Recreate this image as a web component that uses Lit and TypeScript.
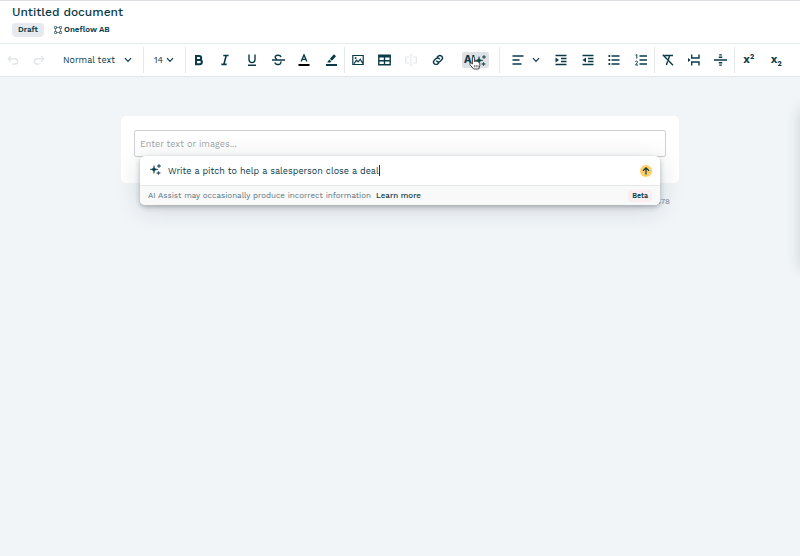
import { LitElement, html, svg, css } from "lit";
import { customElement } from "lit/decorators.js";

const icon = (body: unknown, w = 12, h = 12) =>
  html`<svg width=${w} height=${h} viewBox="0 0 ${w} ${h}" stroke-width="1.4" aria-hidden="true">${body}</svg>`;

const chevron = icon(svg`<path class="s" d="M1 1.2 4 4.3 7 1.2" stroke-width="1.2"/>`, 8, 6);

const sparkles = svg`<path d="M4 1.6C4.4 4.6 4.8 5 8 5.4 4.8 5.8 4.4 6.2 4 9.4 3.6 6.2 3.2 5.8 0 5.4 3.2 5 3.6 4.6 4 1.6Z" stroke="currentColor" stroke-width=".5"/>
  <path d="M9 0C9.2 1.5 9.5 1.8 11 2 9.5 2.2 9.2 2.5 9 4 8.8 2.5 8.5 2.2 7 2 8.5 1.8 8.8 1.5 9 0Z" stroke="currentColor" stroke-width=".4"/>
  <path d="M8.5 7C8.7 8.5 9 8.8 10.5 9 9 9.2 8.7 9.5 8.5 11 8.3 9.5 8 9.2 6.5 9 8 8.8 8.3 8.5 8.5 7Z" stroke="currentColor" stroke-width=".4"/>`;

const icons = {
  undo: icon(svg`<path class="s" d="M4 2 1.2 4.8 4 7.6M1.5 4.8H8a2.6 2.6 0 0 1 0 5.2H5.5"/>`),
  redo: icon(svg`<path class="s" d="M8 2 10.8 4.8 8 7.6M10.5 4.8H4a2.6 2.6 0 0 0 0 5.2H6.5"/>`),
  bold: icon(svg`<path class="s" stroke-width="2" d="M3 2H6.2a2 2 0 0 1 0 4H3ZM3 6H6.8a2.1 2.1 0 0 1 0 4.2H3Z"/>`),
  italic: icon(svg`<path class="s" stroke-width="1.6" d="M4.3 1.5H9.6M2.4 10.4H7.7M7.2 1.5 4.9 10.4"/>`),
  underline: icon(svg`<path class="s" d="M3 .5V5.6a3 3 0 0 0 6 0V.5M2 11.3H10"/>`),
  strike: icon(svg`<path class="s" d="M9 3.2C8.4.6 3.2.6 3.2 3.3 3.2 4.4 4 5 5 5.4M0 6H13M8.9 7.4C9.6 11.4 3.2 11.4 3 8.4"/>`, 13, 12),
  colour: icon(svg`<path class="s" d="M3.2 7.4 6 .8 8.8 7.4M4 5.4H8"/><path d="M.5 10H11.5V12H.5Z" fill="#000"/>`),
  marker: icon(svg`<path d="M9 .3 11 2.2 7 6.8 4.8 4.8ZM4.2 5.4 6.4 7.5 5 8.4H2.2Z"/><path d="M1 10H12V12H1Z"/>`),
  image: icon(svg`<path class="s" d="M.8 1.5H11.2V10.5H.8ZM2 9.6 4.6 6.2 6.2 7.8 8.2 5.2 10.8 9.4" stroke-width="1.2"/><circle cx="3.6" cy="4" r=".9"/>`),
  table: icon(svg`<path class="s" d="M.8 1.2H12.2V10.8H.8ZM.8 6.8H12.2M6.5 2V11"/><path d="M.5 1H12.5V3.5H.5Z"/>`, 13, 12),
  field: icon(svg`<path class="s" d="M4 3H.7V9H4M8 3H11.3V9H8M6 .7V11.3M4.8.7H7.2M4.8 11.3H7.2" stroke-width="1.1"/>`),
  link: icon(svg`<g transform="rotate(-45 6 6)"><path class="s" d="M5 8.5H3.3a2.5 2.5 0 0 1 0-5H5.4a2.5 2.5 0 0 1 2.3 3.2M7 3.5H8.7a2.5 2.5 0 0 1 0 5H6.6A2.5 2.5 0 0 1 4.3 5.3"/></g>`),
  align: icon(svg`<path class="s" d="M.5 2H11.5M.5 6H7.5M.5 10H9.5"/>`),
  indent: icon(svg`<path class="s" d="M.5 1.5H11.5M6 4.5H11.5M6 7.5H11.5M.5 10.5H11.5"/><path d="M.5 3.4 4 6 .5 8.6Z"/>`),
  outdent: icon(svg`<path class="s" d="M.5 1.5H11.5M6 4.5H11.5M6 7.5H11.5M.5 10.5H11.5"/><path d="M4 3.4V8.6L.5 6Z"/>`),
  bullets: icon(svg`<path class="s" d="M3.5 2H11.5M3.5 6H11.5M3.5 10H11.5"/><path d="M.5 1.1H2.2V2.9H.5ZM.5 5.1H2.2V6.9H.5ZM.5 9.1H2.2V10.9H.5Z"/>`),
  numbers: icon(svg`<path class="s" d="M4.5 2H12M4.5 6H12M4.5 10H12"/><path class="s" d="M.6 1.2 1.8.6V4.6M.3 7.6C1 6.5 2.8 7 2.4 8.4L.6 11H3" stroke-width="1"/>`),
  clear: icon(svg`<path class="s" d="M2.5 1.5H11M.8.8 11 11.2M7.4 2 6.4 5.6M5.6 7.2 4.4 11"/>`),
  pageBreak: icon(svg`<path class="s" d="M3.7.5V4H11V.5M3.7 11.5V8H11V11.5"/><path d="M0 4 2.6 6 0 8Z"/>`),
  divider: icon(svg`<path class="s" d="M0 6H13M4.8 3.2H8.2M4.8 8.8H8.2"/><path class="s" d="M5.2.8H7.8M5.2 11.2H7.8" stroke-width="1.2"/>`, 13, 12),
};

@customElement("app-root")
export class AppRoot extends LitElement {
  static styles = css`
    :host {
      display: block;
      min-height: 100vh;
      box-sizing: border-box;
      position: relative;
      overflow: hidden;
      background: #f1f5f8;
      color: #0b3b49;
      font-family: "Work Sans", "Noto Sans", sans-serif;
      font-size: 9px;
      line-height: 14px;
    }
    * { box-sizing: border-box; }
    button, input, select { font: inherit; color: inherit; margin: 0; padding: 0; border: 0; background: none; }
    button { display: flex; align-items: center; justify-content: center; }
    svg { display: block; fill: currentColor; flex: none; }
    .s { fill: none; stroke: currentColor; }
    header { background: #fff; border-top: 1px solid #dcdfe1; padding: 3px 12px 6px; }
    h1 { margin: 0; font-size: 12px; line-height: 16px; font-weight: 500; }
    .meta { display: flex; align-items: center; gap: 10px; margin-top: 3px; font-size: 8px; font-weight: 600; }
    .draft { background: #e6eaee; border-radius: 4px; padding: 0 6px; }
    .owner { display: flex; align-items: center; gap: 2px; }
    .toolbar {
      display: flex;
      align-items: center;
      height: 34px;
      background: #fff;
      border-top: 1px solid #e6ebee;
      border-bottom: 1px solid #e1e7eb;
    }
    .group { display: flex; align-items: center; height: 26px; flex: none; border-right: 1px solid #e3e8eb; }
    .group:last-child { border: 0; }
    .tools { display: flex; flex: 1; }
    .tools button { flex: 1; height: 26px; }
    .tools button:disabled { color: #e2e6e8; }
    .history { width: 52px; flex: none; }
    .pick { position: relative; display: flex; align-items: center; }
    .pick select { appearance: none; width: 100%; outline: 0; }
    .pick svg { position: absolute; right: 0; pointer-events: none; }
    .first { width: 144px; }
    .style { width: 69px; margin-left: 11px; }
    .size { width: 42px; padding: 0 11px 0 10px; }
    .size .pick { width: 100%; }
    .marks { width: 159px; }
    .insert { width: 155px; }
    .para { width: 155px; }
    .breaks { width: 80px; }
    .scripts { width: 66px; padding-right: 11px; }
    .alignment { width: 48px; height: 26px; gap: 8px; padding-left: 3px; }
    .ai { position: relative; width: 27px; height: 16px; margin: 0 10px 0 11px; background: #dfe2e4; border-radius: 2px; font-size: 11px; font-weight: 700; }
    .cursor { position: absolute; left: 7px; top: 4px; }
    .script { font-size: 10px; font-weight: 700; }
    .script sup, .script sub { font-size: 7px; line-height: 0; }
    .script sup { vertical-align: 4px; }
    .script sub { vertical-align: -3px; }
    main { padding: 39px 16px 0; }
    .sheet { position: relative; max-width: 558px; margin: 0 auto; }
    .card { background: #fff; border-radius: 5px; padding: 14px 13px 26px; }
    .content { display: block; width: 100%; height: 27px; border: 1px solid #cdd1d3; border-radius: 2px; padding: 0 5px; outline: 0; }
    .content::placeholder { color: #a1a6a8; opacity: 1; }
    .ident { margin: 12px 9px 0 0; text-align: right; font-size: 8px; color: #7d898f; }
    .assist {
      position: absolute;
      left: 19px;
      right: 19px;
      top: 40px;
      background: #fff;
      border-radius: 5px;
      box-shadow: 0 2px 5px rgba(20, 35, 45, 0.3), 0 4px 24px rgba(20, 35, 45, 0.15);
    }
    .ask { display: flex; align-items: center; height: 29px; padding: 0 8px 0 10px; gap: 7px; }
    .prompt { display: flex; flex: 1; align-items: center; }
    .prompt input { field-sizing: content; outline: 0; }
    .caret { width: 1px; height: 11px; background: #0b3b49; }
    .send { width: 12px; height: 12px; border-radius: 50%; background: #fc6; }
    .note { display: flex; align-items: center; height: 20px; padding: 0 8px; gap: 5px; background: #f9f9fa; border-top: 1px solid #e2e8ed; border-radius: 0 0 5px 5px; font-size: 8px; color: #557480; }
    .note a { color: #0b3b49; text-decoration: none; font-weight: 500; }
    .beta { margin-left: auto; padding: 0 4px; line-height: 12px; border-radius: 3px; background: #faeef1; color: #0b3b49; font-size: 7px; font-weight: 600; }
    .drawer { position: absolute; left: 100%; top: 109px; width: 40px; height: 160px; box-shadow: 0 0 14px rgba(20, 35, 45, 0.16); }
  `;

  private tool(name: keyof typeof icons, label: string, disabled = false) {
    return html`<button aria-label=${label} ?disabled=${disabled}>${icons[name]}</button>`;
  }

  render() {
    return html`
      <header>
        <h1>Untitled document</h1>
        <div class="meta">
          <span class="draft">Draft</span>
          <span class="owner">
            ${icon(svg`<path class="s" d="M.5.5H2.5V2.5H.5ZM5.5.5H7.5V2.5H5.5ZM.5 5.5H2.5V7.5H.5ZM5.5 5.5H7.5V7.5H5.5ZM2.5 1.5H5.5M2.5 6.5H5.5M1.5 2.5V5.5M6.5 2.5V5.5" stroke-width=".6"/>`, 8, 8)}
            Oneflow AB
          </span>
        </div>
      </header>
      <div class="toolbar" role="toolbar" aria-label="Formatting">
        <div class="group first">
          <div class="tools history">${this.tool("undo", "Undo", true)}${this.tool("redo", "Redo", true)}</div>
          <label class="pick style"><select aria-label="Text style"><option>Normal text</option></select>${chevron}</label>
        </div>
        <div class="group size">
          <label class="pick"><select aria-label="Font size"><option>14</option></select>${chevron}</label>
        </div>
        <div class="group marks"><div class="tools">
          ${this.tool("bold", "Bold")}${this.tool("italic", "Italic")}${this.tool("underline", "Underline")}
          ${this.tool("strike", "Strikethrough")}${this.tool("colour", "Text colour")}${this.tool("marker", "Highlight")}
        </div></div>
        <div class="group insert">
          <div class="tools">
            ${this.tool("image", "Image")}${this.tool("table", "Table")}${this.tool("field", "Data field", true)}${this.tool("link", "Link")}
          </div>
          <button class="ai" aria-label="AI Assist">AI${icon(sparkles, 12, 11)}
            <svg class="cursor" width="12" height="14" viewBox="0 0 12 14"><path d="M3.4 8V1.8a1 1 0 0 1 2 0V5.5L6 5 7.4 5.6 8.5 5.5 9.5 6.3 10.8 6.8V9.5L9.8 13H4.5L1 8.6A.9.9 0 0 1 2.4 7.3Z" fill="#fff" stroke="#333" stroke-width=".9"/><path d="M5.4 9V11.4M7.2 9V11.4M9 9V11.4" stroke="#333" stroke-width=".7"/></svg>
          </button>
        </div>
        <div class="group para">
          <button class="alignment" aria-label="Align">${icons.align}${chevron}</button>
          <div class="tools">
            ${this.tool("indent", "Indent")}${this.tool("outdent", "Outdent")}${this.tool("bullets", "Bulleted list")}${this.tool("numbers", "Numbered list")}
          </div>
        </div>
        <div class="group breaks"><div class="tools">
          ${this.tool("clear", "Clear formatting")}${this.tool("pageBreak", "Page break")}${this.tool("divider", "Divider")}
        </div></div>
        <div class="group scripts"><div class="tools">
          <button class="script"><span>X<sup>2</sup></span></button>
          <button class="script"><span>X<sub>2</sub></span></button>
        </div></div>
      </div>
      <main>
        <div class="sheet">
          <div class="card"><input class="content" aria-label="Content" placeholder="Enter text or images..." /></div>
          <div class="ident">ID 0000478</div>
          <section class="assist" aria-label="AI Assist">
            <div class="ask">
              ${icon(sparkles, 11, 13)}
              <div class="prompt"><input aria-label="Prompt" value="Write a pitch to help a salesperson close a deal" /><span class="caret"></span></div>
              <button class="send" aria-label="Send">${icon(svg`<path class="s" d="M4 7.5V1M1 3.8 4 .9 7 3.8" stroke-width="1.2"/>`, 8, 8)}</button>
            </div>
            <div class="note">
              <span>AI Assist may occasionally produce incorrect information</span>
              <a href="#">Learn more</a>
              <span class="beta">Beta</span>
            </div>
          </section>
        </div>
      </main>
      <div class="drawer"></div>
    `;
  }
}
